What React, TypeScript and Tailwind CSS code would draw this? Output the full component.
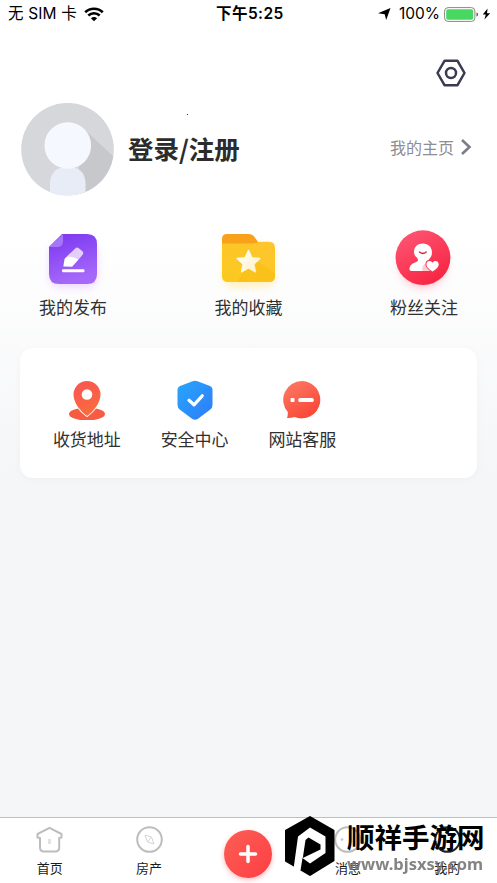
import type { ReactNode } from "react";

const cjk = "font-['Noto_Sans_CJK_SC',sans-serif]";

function StatusBar() {
  return (
    <div className="flex h-7 shrink-0 items-center pl-2 pr-[6px] text-black">
      <div className="flex w-[200px] items-center">
        <span className="whitespace-pre font-['Inter','Noto_Sans_CJK_SC',sans-serif] text-[15.500px] leading-7 tracking-[0.15px]">无 SIM 卡</span>
        <svg className="ml-[7px] h-[15px] w-[20px]" viewBox="0 0 20 15" fill="none" stroke="#000" strokeWidth="2.600">
          <path d="M1.200 5.200C6 .5 14 .5 18.800 5.200M4.300 8.500c3.200-3 8.200-3 11.400 0" />
          <path d="M6.900 11.200c1.800-1.600 4.400-1.600 6.200 0L10 14.200Z" fill="#000" stroke="none" />
        </svg>
      </div>
      <span className="ml-[8px] w-[70px] whitespace-nowrap font-['Inter','Noto_Sans_CJK_SC',sans-serif] text-[15.500px] font-semibold leading-7 tracking-[0.450px]">下午5:25</span>
      <div className="ml-auto flex items-center">
        <svg className="mr-2 h-3 w-[13px]" viewBox="0 0 13 12"><path d="M12.500 0 8.200 12 6.700 6.200 0 5.200Z" /></svg>
        <span className="font-['Inter',sans-serif] text-[15.500px] leading-7">100%</span>
        <svg className="ml-1 h-[15px] w-[35px]" viewBox="0 0 35 15">
          <rect x=".6" y=".6" width="30.300" height="13.800" rx="3.500" fill="#fff" stroke="#888" strokeWidth="1" />
          <rect x="2.200" y="2.200" width="27" height="10.600" rx="1.800" fill="#48d862" />
          <path d="M32.500 5.500c2 .5 2 3.500 0 4Z" fill="#555" />
        </svg>
        <svg className="ml-[3px] h-3 w-[9px]" viewBox="0 0 9 12"><path d="M5.600.5.8 6.600h3L2.400 11.500 8.200 5.200H5Z" /></svg>
      </div>
    </div>
  );
}

function Avatar() {
  return (
    <svg className="h-[93px] w-[93px] shrink-0" viewBox="0 0 93 93">
      <defs><clipPath id="face"><circle cx="46.500" cy="46.200" r="46.300" /></clipPath></defs>
      <g clipPath="url(#face)">
        <path fill="#d5d7da" d="M0 0h93v93H0z" />
        <path fill="#c7c8cb" d="M65 28 93 54v39H58V62Z" />
        <path fill="#e8ecf6" d="M29 93V80c0-9 6-15.500 13-15.500h9c8 0 13.500 7 13.500 15.500v13Z" />
        <circle cx="46.800" cy="42.500" r="23.300" fill="#f5f9ff" />
      </g>
    </svg>
  );
}

function PublishIcon() {
  return (
    <svg className="h-[70px] w-[70px]" viewBox="0 0 70 70">
      <defs>
        <linearGradient id="pu" x1="0" y1="0" x2=".3" y2="1"><stop stopColor="#7a36ef" /><stop offset="1" stopColor="#a568fa" /></linearGradient>
        <filter id="soft" x="-30%" y="-30%" width="160%" height="160%"><feGaussianBlur stdDeviation="4" /></filter>
      </defs>
      <rect x="12" y="18" width="47" height="44" rx="10" fill="#ecd3ff" filter="url(#soft)" />
      <path fill="url(#pu)" d="M24 9h25q10 0 10 10v30q0 10-10 10H21q-10 0-10-10V22Z" />
      <path fill="#a676f8" d="M25 9v7q0 6-6 6h-8Z" />
      <path fill="#fff" d="m25.300 41.500 1.300-7.800 5.500-5.200 8.500 6-6.500 7.300Z" />
      <path fill="#e2cffc" d="m32 28.500 5.500-5.300q1.500-1.300 3.300 0l3.400 2.900q2 1.700.4 3.600l-4 4.800q-4.500-2.800-11.500-3.100Z" />
      <rect x="24" y="44.300" width="22.500" height="3" rx="1.200" fill="#fff" />
    </svg>
  );
}

function FavoriteIcon() {
  return (
    <svg className="h-[70px] w-[70px]" viewBox="0 0 70 70">
      <defs>
        <linearGradient id="ye" x1="1" y1="0" x2="0" y2="1"><stop stopColor="#fec52d" /><stop offset="1" stopColor="#fbc91f" /></linearGradient>
        <linearGradient id="st" x1="0" y1="0" x2="1" y2="1"><stop stopColor="#fff" /><stop offset="1" stopColor="#fff1c4" /></linearGradient>
      </defs>
      <rect x="10" y="20" width="50" height="42" rx="8" fill="#fff0bd" filter="url(#soft)" />
      <path fill="#faa11b" d="M8 14q0-5 5-5h21.500q4 0 6 3l5 7v15H8Z" />
      <path fill="url(#ye)" d="M8 18.500h30.500q4.500-.500 7-1.800h9.500q6 0 6 6V51q0 6-6 6H14q-6 0-6-6Z" />
      <path fill="#f9be16" d="m38 33 23 15v3q0 6-6 6H23Z" opacity=".65" />
      <path fill="url(#st)" stroke="url(#st)" strokeLinejoin="round" strokeWidth="1.500" d="m34.500 25.500 3.300 7.200 7.900.9-5.900 5.300 1.600 7.900-6.900-4-6.900 4 1.600-7.900-5.900-5.300 7.900-.9Z" />
    </svg>
  );
}

function FollowIcon() {
  return (
    <svg className="h-[70px] w-[70px]" viewBox="0 0 70 70">
      <defs><linearGradient id="re" x1="0" y1="0" x2=".6" y2="1"><stop stopColor="#ff5978" /><stop offset="1" stopColor="#f72743" /></linearGradient></defs>
      <circle cx="34" cy="39" r="24" fill="#ffc5cf" filter="url(#soft)" />
      <circle cx="34" cy="32.700" r="27.400" fill="url(#re)" />
      <path fill="#fff" d="M34 18.500c5.200 0 9 3.800 9 9 0 3.200-1.400 5-2.900 6.700-1.100 1.300-.8 2.600.6 3.500l5.300 3.400v4.800H22.500q-2.500 0-2-2.500c.8-4.700 4.500-5.300 7.200-6.700 1.600-.8 1.500-2.300.5-3.600-1.700-1.800-3.200-3.200-3.200-6 0-5.200 3.800-8.600 9-8.600Z" />
      <path fill="#ffcbd2" d="M33.500 45.900c-1-4.600 1.200-7.700 6.800-8.700l4 8.700Z" />
      <path d="M30.500 27q3.400 2.800 6.700 0" fill="none" stroke="#d52e46" strokeWidth="1.500" strokeLinecap="round" />
      <path d="M43.500 46.500c-3.800-2.800-6.100-4.700-6.100-7.100 0-3.800 4.300-4.500 6.100-1.700 1.800-2.800 6.200-2.100 6.200 1.700 0 2.400-2.300 4.300-6.200 7.100Z" fill="#fff" stroke="#f43751" strokeWidth="2" paintOrder="stroke" />
    </svg>
  );
}

function AddressIcon() {
  return (
    <svg className="h-10 w-10" viewBox="0 0 40 40">
      <defs><linearGradient id="pin" x1="0" y1="0" x2=".3" y2="1"><stop stopColor="#f95452" /><stop offset="1" stopColor="#f96b3f" /></linearGradient></defs>
      <ellipse cx="20" cy="34" rx="18" ry="6.500" fill="#f75b42" />
      <path d="M20 36C13 31 6.500 22.500 6.500 14.500a13.500 13.500 0 0 1 27 0c0 8-6.500 16.500-13.500 21.500Z" fill="url(#pin)" stroke="#fff" strokeWidth="2" paintOrder="stroke" />
      <circle cx="20" cy="14.500" r="5.300" fill="#fff" />
    </svg>
  );
}

function SecurityIcon() {
  return (
    <svg className="h-10 w-10" viewBox="0 0 40 40">
      <defs><linearGradient id="bl" x1="0" y1="0" x2="1" y2="1"><stop stopColor="#28a7fc" /><stop offset="1" stopColor="#2e7bfa" /></linearGradient></defs>
      <path fill="url(#bl)" d="M17.500 1.300q2.500-1 5 0L35 6q2.500 1 2.500 3.500V25q0 3-2.500 4.800l-12 9q-3 2-6 0L5 29.800Q2.500 28 2.500 25V9.500Q2.500 7 5 6Z" />
      <path d="m14 20.300 5 4.500 8.200-9" fill="none" stroke="#fff" strokeWidth="3.200" strokeLinecap="round" strokeLinejoin="round" />
    </svg>
  );
}

function ServiceIcon() {
  return (
    <svg className="h-10 w-10" viewBox="0 0 40 40">
      <defs><linearGradient id="ch" x1=".1" y1="0" x2=".7" y2="1"><stop stopColor="#fd7a66" /><stop offset="1" stopColor="#f94635" /></linearGradient></defs>
      <path fill="url(#ch)" d="M20 1a18.700 18.700 0 1 1-7.500 36q-3.500 1.200-7.500 1 1-2.600.8-6A18.700 18.700 0 0 1 20 1Z" />
      <rect x="8.500" y="18" width="4" height="4" rx="1" fill="#fff" />
      <rect x="16.300" y="18" width="15.400" height="4" rx="1.600" fill="#fff" />
    </svg>
  );
}

function Action({ icon, label }: { icon: ReactNode; label: string }) {
  return (
    <div className="flex w-[106px] flex-col items-center">
      {icon}
      <span className="text-[17px] leading-6 text-[#303030]">{label}</span>
    </div>
  );
}

function Service({ icon, label }: { icon: ReactNode; label: string }) {
  return (
    <div className="flex flex-col items-center">
      {icon}
      <span className="mt-[7px] text-[17px] leading-6 text-[#303030]">{label}</span>
    </div>
  );
}

function Tab({ label, children }: { label: string; children: ReactNode }) {
  return (
    <div className="flex flex-col items-center pt-[7px]">
      <svg className="h-[29px] w-[29px]" viewBox="0 0 29 29" fill="none" stroke="#bdbdbd" strokeWidth="2">{children}</svg>
      <span className="mt-[4px] text-[13px] leading-5 text-[#1c1c1c]">{label}</span>
    </div>
  );
}

function TabBar() {
  return (
    <nav className="grid h-[66px] shrink-0 grid-cols-5 border-t border-[#bfbfc1] bg-white">
      <Tab label="首页">
        <path strokeLinejoin="round" d="m14.500 2.800 12 6.200v3.500l-2.300.4v9.600q0 4-4 4H9q-4 0-4-4v-9.600l-2.500-.4V9Z" />
        <path stroke="#e2e2e2" strokeWidth="3" d="M14.500 14v5" />
      </Tab>
      <Tab label="房产">
        <circle cx="14.500" cy="14.500" r="12.300" />
        <path stroke="#d5d5d5" strokeWidth="1" d="m10 10 6.500 2 2.500 7-6.500-2Zm2.500 7 4-5" />
      </Tab>
      <div className="flex justify-center pt-3">
        <div className="flex h-12 w-12 items-center justify-center rounded-full bg-linear-to-br from-[#fc5d54] to-[#fe3d44] shadow-[0_2px_5px_#ff555966]">
          <svg className="h-5 w-5" viewBox="0 0 20 20" stroke="#fff" strokeWidth="3.500" strokeLinecap="round"><path d="M10 2.500v15M2.500 10h15" /></svg>
        </div>
      </div>
      <Tab label="消息">
        <circle cx="14.500" cy="14.500" r="12.300" />
        <circle cx="9" cy="14.500" r="1" fill="#ccc" stroke="#ccc" strokeWidth="1" />
      </Tab>
      <Tab label="我的">
        <circle cx="14.500" cy="14.500" r="12.300" stroke="#222" />
      </Tab>
    </nav>
  );
}

function Watermark() {
  return (
    <div className="pointer-events-none absolute bottom-[6px] left-[285px] flex h-[62px] items-center">
      <svg className="h-[60px] w-[50px] shrink-0" viewBox="0 0 50 60">
        <path d="M25 1 48.500 14.500v30L25 59 1 45V14.500Z" stroke="#000" strokeWidth="2" strokeLinejoin="round" />
        <path fill="#fff" d="M8.500 53 13 20.500 25 11.500 40.500 20.500V37L25 47.500 17.500 42 15.500 54.500Z" />
        <path d="m23.500 21.500 12 7v5L17.800 42 20.500 24Z" />
      </svg>
      <div className="ml-3 mt-[3px] flex w-[138px] flex-col">
        <span className="whitespace-nowrap text-[27.500px] font-bold leading-7 text-black">顺祥手游网</span>
        <span className="mt-[4px] whitespace-nowrap font-['Noto_Sans',sans-serif] text-[16.500px] font-bold leading-5 text-[#777] opacity-90">www.bjsxsy.com</span>
      </div>
    </div>
  );
}

export default function App() {
  return (
    <div className={`relative flex h-[883px] w-[497px] flex-col overflow-hidden bg-[linear-gradient(180deg,#fff_0px,#fff_230px,#f5f6f8_470px,#f5f6f8_100%)] ${cjk}`}>
      <StatusBar />
      <div className="flex justify-end pr-[31px] pt-[30px]">
        <svg className="h-[30px] w-[30px]" viewBox="0 0 30 30" fill="none" stroke="#3b3a53" strokeWidth="2.500" strokeLinejoin="round">
          <path d="M8.500 2.800h13L28.500 15l-7 12.200h-13L1.500 15Z" />
          <circle cx="15" cy="15" r="5" />
        </svg>
      </div>
      <header className="mt-[15px] flex h-[93px] items-center pl-[21px] pr-[25px]">
        <Avatar />
        <h1 className="ml-[14px] mt-[-4px] text-[25.500px] font-bold leading-9 text-[#2c2c2c]">登录/注册</h1>
        <span className="mb-[70px] ml-[-53px] h-px w-px bg-[#5a2035]" />
        <span className="ml-auto mt-[-6px] text-[16px] leading-6 text-[#8d8d95]">我的主页</span>
        <svg className="ml-[6px] mt-[-6px] h-[18px] w-3" viewBox="0 0 12 18" fill="none" stroke="#7c7c8b" strokeWidth="2.600"><path d="m2 2 7.500 7L2 16" /></svg>
      </header>
      <section className="mt-[29px] flex justify-between px-5">
        <Action icon={<PublishIcon />} label="我的发布" />
        <Action icon={<FavoriteIcon />} label="我的收藏" />
        <Action icon={<FollowIcon />} label="粉丝关注" />
      </section>
      <section className="mx-5 mt-[29px] grid h-[130px] shrink-0 grid-cols-4 rounded-[13px] bg-white px-[13px] pt-8 shadow-[0_1px_8px_#00000008]">
        <Service icon={<AddressIcon />} label="收货地址" />
        <Service icon={<SecurityIcon />} label="安全中心" />
        <Service icon={<ServiceIcon />} label="网站客服" />
      </section>
      <div className="flex-1" />
      <TabBar />
      <Watermark />
    </div>
  );
}
